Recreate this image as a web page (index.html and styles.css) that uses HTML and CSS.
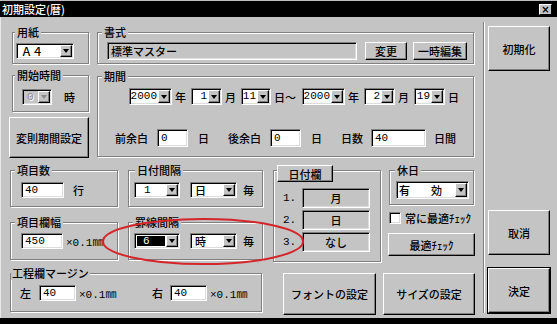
FILE: index.html
```html
<!DOCTYPE html>
<html>
<head>
    <meta charset="UTF-8">
    <title>初期設定(暦)</title>
    <link rel="stylesheet" href="styles.css">
</head>
<body>
<div class="window">
    <div class="titlebar">
        <span class="title">初期設定(暦)</span>
        <span class="close">×</span>
    </div>

    <div class="client">
        <div class="main">
            <div class="top">
                <div class="top-left">
                    <div class="group paper">
                        <div class="legend">用紙</div>
                        <div class="row">
                            <div class="combo w58"><span class="val">Ａ４</span><span class="arrow"></span></div>
                        </div>
                    </div>
                    <div class="group start">
                        <div class="legend">開始時間</div>
                        <div class="row">
                            <div class="combo disabled w30"><span class="val num">0</span><span class="arrow"></span></div>
                            <span class="unit hour">時</span>
                        </div>
                    </div>
                    <button class="btn irregular">変則期間設定</button>
                </div>

                <div class="top-right">
                    <div class="group format">
                        <div class="legend">書式</div>
                        <div class="row">
                            <div class="static format-name">標準マスター</div>
                            <button class="btn change">変更</button>
                            <button class="btn temp-edit">一時編集</button>
                        </div>
                    </div>
                    <div class="group period">
                        <div class="legend">期間</div>
                        <div class="row dates">
                            <div class="combo right w43"><span class="val num">2000</span><span class="arrow"></span></div>
                            <span class="unit">年</span>
                            <div class="combo right w31"><span class="val num">1</span><span class="arrow"></span></div>
                            <span class="unit">月</span>
                            <div class="combo right w30"><span class="val num">11</span><span class="arrow"></span></div>
                            <span class="unit wide">日～</span>
                            <div class="combo right w43"><span class="val num">2000</span><span class="arrow"></span></div>
                            <span class="unit">年</span>
                            <div class="combo right w31"><span class="val num">2</span><span class="arrow"></span></div>
                            <span class="unit">月</span>
                            <div class="combo right w31"><span class="val num">19</span><span class="arrow"></span></div>
                            <span class="unit">日</span>
                        </div>
                        <div class="row spare">
                            <span class="label">前余白</span>
                            <div class="input w31 num">0</div>
                            <span class="unit after">日</span>
                            <span class="label">後余白</span>
                            <div class="input w31 num">0</div>
                            <span class="unit after">日</span>
                            <span class="label short">日数</span>
                            <div class="input w55 num">40</div>
                            <span class="unit last">日間</span>
                        </div>
                    </div>
                </div>
            </div>

            <div class="lower">
                <div class="lower-left">
                    <div class="pair">
                        <div class="group count">
                            <div class="legend">項目数</div>
                            <div class="row">
                                <div class="input w43 num">40</div>
                                <span class="unit gap9">行</span>
                            </div>
                        </div>
                        <div class="group step">
                            <div class="legend">日付間隔</div>
                            <div class="row">
                                <div class="combo w46"><span class="val num pad">1</span><span class="arrow"></span></div>
                                <div class="combo w47 next"><span class="val">日</span><span class="arrow"></span></div>
                                <span class="unit each">毎</span>
                            </div>
                        </div>
                    </div>
                    <div class="pair">
                        <div class="group col-width">
                            <div class="legend">項目欄幅</div>
                            <div class="row">
                                <div class="input w42 num">450</div>
                                <span class="mm gap9">×0.1㎜</span>
                            </div>
                        </div>
                        <div class="group rule">
                            <div class="legend">罫線間隔</div>
                            <div class="row">
                                <div class="combo w46"><span class="val num selected">6</span><span class="arrow"></span></div>
                                <div class="combo w47 next"><span class="val">時</span><span class="arrow"></span></div>
                                <span class="unit each">毎</span>
                            </div>
                        </div>
                    </div>
                    <div class="group margins">
                        <div class="legend">工程欄マージン</div>
                        <div class="row">
                            <span class="side-label">左</span>
                            <div class="input w37 num">40</div>
                            <span class="mm">×0.1㎜</span>
                            <span class="side-label right-label">右</span>
                            <div class="input w37 num">40</div>
                            <span class="mm">×0.1㎜</span>
                        </div>
                    </div>
                </div>

                <div class="col-date">
                    <div class="group date-cols">
                        <button class="btn legend-btn">日付欄</button>
                        <div class="date-row"><span class="num idx">1.</span><div class="static cell">月</div></div>
                        <div class="date-row"><span class="num idx">2.</span><div class="static cell">日</div></div>
                        <div class="date-row"><span class="num idx">3.</span><div class="static cell">なし</div></div>
                    </div>
                    <button class="btn font-btn">フォントの設定</button>
                </div>

                <div class="col-holiday">
                    <div class="group holiday">
                        <div class="legend">休日</div>
                        <div class="row">
                            <div class="combo w73 tall"><span class="val spaced">有　効</span><span class="arrow"></span></div>
                        </div>
                    </div>
                    <label class="check-row">
                        <span class="checkbox"></span>
                        <span>常に最適ﾁｪｯｸ</span>
                    </label>
                    <button class="btn fit-btn">最適ﾁｪｯｸ</button>
                    <button class="btn size-btn">サイズの設定</button>
                </div>
            </div>
        </div>

        <div class="side">
            <div class="sep"></div>
            <div class="side-buttons">
                <button class="btn init">初期化</button>
                <button class="btn cancel">取消</button>
                <button class="btn ok">決定</button>
            </div>
        </div>
    </div>
</div>

<!-- 赤丸の注記 -->
<svg class="mark" width="206" height="50" viewBox="0 0 206 50">
    <ellipse cx="103" cy="24.5" rx="100" ry="22.5" fill="none" stroke="#d4252b" stroke-width="2"/>
</svg>
</body>
</html>
```

FILE: styles.css
```css
* {
    box-sizing: border-box;
}

body {
    margin: 0;
    background-color: #000;
    font-family: "Noto Sans CJK JP", sans-serif;
    font-size: 11px;
    font-weight: 500;
    color: #000;
}

.window {
    position: relative;
    width: 557px;
    height: 318px;
    background-color: #c4c4c4;
    display: flex;
    flex-direction: column;
    box-shadow: inset 1px 0 0 #e8e8e8;
}

.titlebar {
    height: 17px;
    background-color: #000;
    color: #fff;
    display: flex;
    align-items: center;
    padding: 0 5px 0 2px;
    border-top: 1px solid #bdbdbd;
}

.title {
    font-size: 11px;
    line-height: 14px;
}

.close {
    margin-left: auto;
    width: 13px;
    height: 11px;
    background-color: #c4c4c4;
    color: #000;
    font-family: "DejaVu Sans", sans-serif;
    font-weight: bold;
    font-size: 10px;
    line-height: 9px;
    text-align: center;
    border: 1px solid;
    border-color: #fff #000 #000 #fff;
}

.client {
    flex: 1;
    display: flex;
}

.main {
    width: 483px;
    padding-left: 9px;
}

.num {
    font-family: "Liberation Mono", monospace;
    font-weight: normal;
}

/* 枠 */
.group {
    display: flex;
    flex-direction: column;
    align-items: flex-start;
    border: 1px solid #808080;
    box-shadow: 1px 1px 0 #fff, inset 1px 1px 0 #fff;
}

.legend {
    margin: -7px 0 0 4px;
    padding: 0 2px;
    height: 13px;
    line-height: 13px;
    background-color: #c4c4c4;
    white-space: nowrap;
}

.row {
    display: flex;
    align-items: center;
}

/* ボタン */
.btn {
    padding: 0;
    font-family: inherit;
    font-size: 11px;
    font-weight: 500;
    color: #000;
    background-color: #c4c4c4;
    border: 1px solid;
    border-color: #fff #000 #000 #fff;
    box-shadow: inset -1px -1px 0 #808080;
    white-space: nowrap;
}

/* 入力欄 */
.input, .combo, .static, .checkbox {
    border: 1px solid;
    border-color: #808080 #fff #fff #808080;
    box-shadow: inset 1px 1px 0 #000, inset -1px -1px 0 #dcdcdc;
}

.input {
    height: 16px;
    background-color: #fff;
    padding-left: 3px;
    line-height: 14px;
}

.static {
    background-color: #c4c4c4;
}

.combo {
    height: 16px;
    background-color: #fff;
    display: flex;
}

.combo .val {
    flex: 1;
    padding-left: 4px;
    line-height: 14px;
    white-space: nowrap;
}

.combo.right .val {
    text-align: right;
    padding: 0 1px 0 0;
}

.combo .val.pad {
    padding-left: 9px;
}

.combo .val.selected {
    margin: 2px 1px 2px 2px;
    padding-left: 6px;
    background-color: #000;
    color: #fff;
    line-height: 10px;
}

.combo .arrow {
    width: 12px;
    margin: 1px 1px 1px 0;
    background-color: #c4c4c4;
    border: 1px solid;
    border-color: #fff #000 #000 #fff;
    box-shadow: inset -1px -1px 0 #808080;
    display: flex;
    align-items: center;
    justify-content: center;
}

.combo .arrow::after {
    content: "";
    border-left: 3px solid transparent;
    border-right: 3px solid transparent;
    border-top: 4px solid #000;
}

.combo.disabled {
    background-color: #c4c4c4;
}

.combo.disabled .val {
    color: #8a8a8a;
    text-shadow: 1px 1px 0 #fff;
}

.combo.disabled .arrow::after {
    border-top-color: #8a8a8a;
}

.combo.tall {
    height: 18px;
}

.w30 { width: 30px; }
.w31 { width: 31px; }
.w37 { width: 37px; }
.w42 { width: 42px; }
.w43 { width: 43px; }
.w46 { width: 46px; }
.w47 { width: 47px; }
.w55 { width: 55px; }
.w58 { width: 58px; }
.w73 { width: 73px; }

.unit {
    white-space: nowrap;
}

.gap9 {
    margin-left: 9px;
}

.mm {
    width: 42px;
    margin-left: 3px;
    font-family: "Liberation Mono", "Noto Sans CJK JP", monospace;
    font-weight: normal;
    font-size: 11px;
    white-space: nowrap;
}

/* 上段 */
.top {
    display: flex;
    gap: 8px;
    padding-top: 15px;
}

.top-left {
    width: 80px;
    display: flex;
    flex-direction: column;
    align-items: flex-start;
}

.paper {
    margin-left: 3px;
    width: 77px;
    height: 32px;
}

.paper .legend,
.start .legend {
    margin-left: 2px;
}

.paper .row {
    margin: 4px 0 0 3px;
}

.start {
    margin: 11px 0 0 3px;
    width: 77px;
    height: 37px;
}

.start .row {
    margin: 7px 0 0 9px;
}

.hour {
    margin-left: 12px;
}

.irregular {
    margin-top: 5px;
    width: 80px;
    height: 41px;
}

.top-right {
    width: 377px;
    display: flex;
    flex-direction: column;
}

.format {
    height: 32px;
}

.format .row {
    margin: 3px 0 0 9px;
}

.format-name {
    width: 250px;
    height: 18px;
    padding-left: 3px;
    line-height: 16px;
}

.change {
    margin-left: 8px;
    width: 42px;
    height: 18px;
}

.temp-edit {
    margin-left: 6px;
    width: 54px;
    height: 18px;
}

.period {
    margin-top: 12px;
    height: 81px;
}

.dates {
    margin: 5px 0 0 31px;
}

.dates .combo {
    height: 17px;
}

.dates .unit {
    width: 12px;
    margin: 0 4px 0 3px;
}

.dates .unit.wide {
    width: 24px;
}

.spare {
    margin: 24px 0 0 17px;
}

.spare .input {
    height: 18px;
    line-height: 16px;
}

.spare .label {
    width: 33px;
    margin-right: 9px;
}

.spare .label.short {
    width: 22px;
    margin-right: 8px;
}

.spare .unit.after {
    width: 30px;
    margin-left: 10px;
}

.spare .unit.last {
    margin-left: 8px;
}

/* 下段 */
.lower {
    display: flex;
    margin: 12px 0 0 1px;
}

.lower-left {
    width: 253px;
    display: flex;
    flex-direction: column;
}

.pair {
    display: flex;
    gap: 10px;
}

.pair + .pair {
    margin-top: 15px;
}

.count {
    width: 108px;
    height: 37px;
}

.count .row {
    margin: 5px 0 0 10px;
}

.step {
    width: 135px;
    height: 37px;
}

.step .legend {
    margin-left: 6px;
}

.step .row,
.rule .row {
    margin: 5px 0 0 5px;
}

.rule .row {
    margin-top: 4px;
}

.combo.next {
    margin-left: 10px;
}

.each {
    margin-left: 6px;
}

.col-width {
    width: 108px;
    height: 38px;
}

.col-width .row {
    margin: 4px 0 0 10px;
}

.rule {
    width: 135px;
    height: 38px;
}

.margins {
    margin-top: 13px;
    width: 252px;
    height: 39px;
}

.margins .legend {
    margin-left: 0;
    padding: 0 1px;
}

.margins .row {
    margin: 5px 0 0 9px;
}

.side-label {
    width: 11px;
    margin-right: 8px;
}

.right-label {
    margin-left: 31px;
    margin-right: 7px;
}

.col-date {
    margin-left: 10px;
    width: 108px;
    display: flex;
    flex-direction: column;
    align-items: flex-start;
}

.date-cols {
    width: 108px;
    height: 92px;
}

.legend-btn {
    margin: -6px 0 0 3px;
    width: 56px;
    height: 17px;
}

.date-row {
    display: flex;
    align-items: center;
    margin: 2px 0 0 9px;
}

.legend-btn + .date-row {
    margin-top: 6px;
}

.idx {
    width: 19px;
}

.cell {
    width: 68px;
    height: 20px;
    line-height: 18px;
    text-align: center;
}

.font-btn {
    margin: 11px 0 0 10px;
    width: 93px;
    height: 42px;
}

.col-holiday {
    margin-left: 7px;
    width: 87px;
    display: flex;
    flex-direction: column;
    align-items: flex-start;
}

.holiday {
    margin-left: 1px;
    width: 85px;
    height: 35px;
}

.holiday .legend {
    margin-left: 5px;
}

.holiday .row {
    margin: 4px 0 0 6px;
}

.holiday .val.spaced {
    padding-left: 2px;
    letter-spacing: 5px;
    line-height: 16px;
}

.check-row {
    margin: 7px 0 0 1px;
    height: 12px;
    display: flex;
    align-items: center;
    gap: 4px;
    white-space: nowrap;
}

.checkbox {
    width: 12px;
    height: 12px;
    background-color: #fff;
}

.fit-btn {
    margin-top: 9px;
    width: 87px;
    height: 23px;
}

.size-btn {
    margin: 17px 0 0 -5px;
    width: 92px;
    height: 42px;
}

/* 右の列 */
.side {
    display: flex;
}

.sep {
    width: 2px;
    margin: 5px 0;
    border-left: 1px solid #808080;
    border-right: 1px solid #fff;
}

.side-buttons {
    width: 62px;
    margin-left: 3px;
    display: flex;
    flex-direction: column;
}

.side-buttons .btn {
    height: 45px;
}

.init {
    margin-top: 9px;
}

.cancel {
    margin-top: 139px;
}

.ok {
    margin-top: 13px;
    outline: 1px solid #000;
}

.mark {
    position: absolute;
    left: 100px;
    top: 217px;
    pointer-events: none;
}
```
